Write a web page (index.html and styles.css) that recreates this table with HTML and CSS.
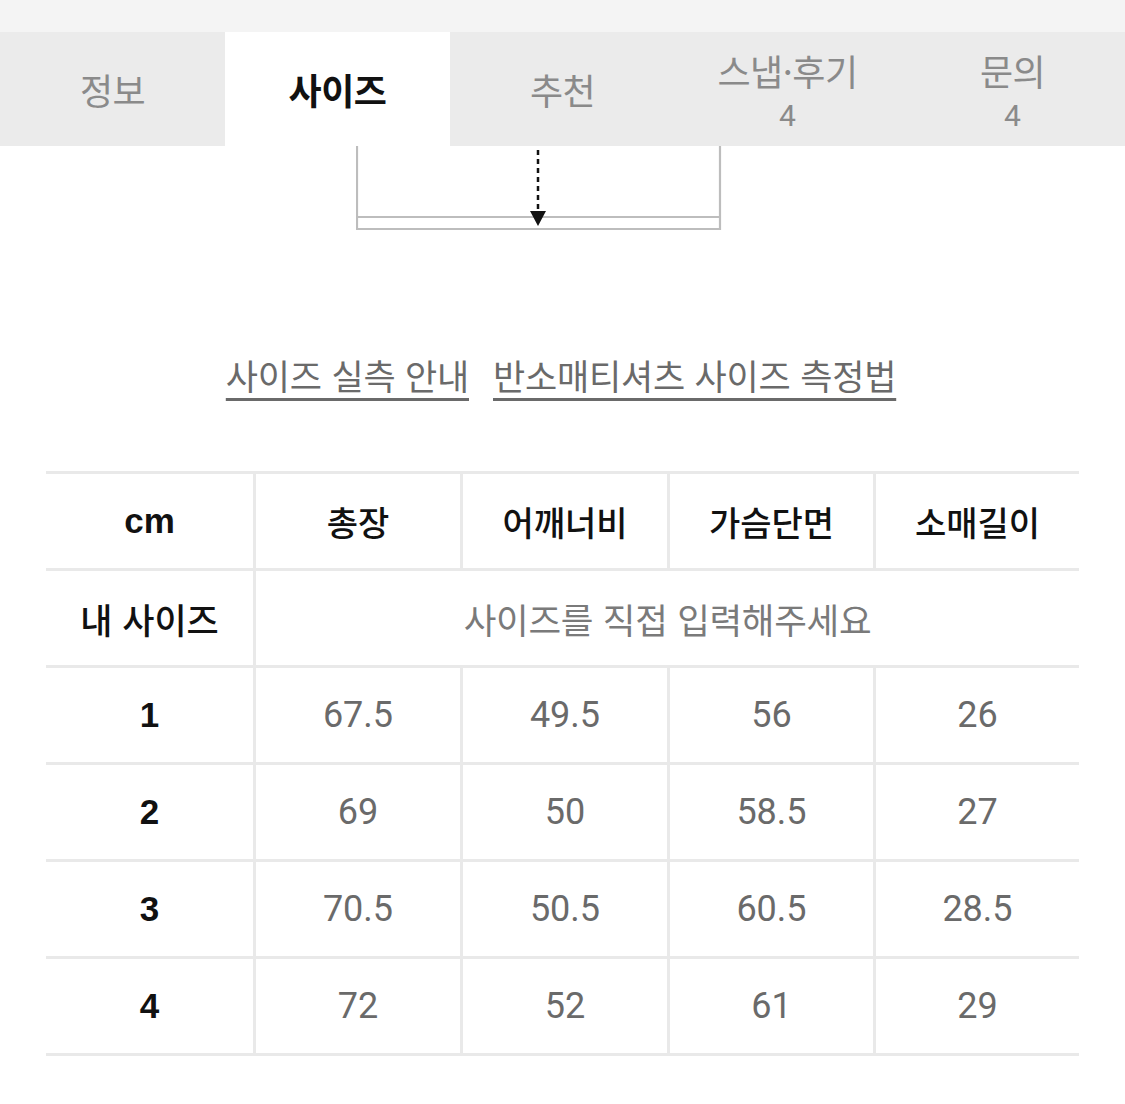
FILE: index.html
```html
<!DOCTYPE html>
<html lang="ko">
<head>
<meta charset="utf-8">
<link rel="stylesheet" href="styles.css">
</head>
<body>
<div class="topstrip"></div>
<nav class="tabs">
  <div class="tab"><span class="tab-label">정보</span></div>
  <div class="tab active"><span class="tab-label">사이즈</span></div>
  <div class="tab"><span class="tab-label">추천</span></div>
  <div class="tab two"><span class="tab-label">스냅·후기</span><span class="tab-count">4</span></div>
  <div class="tab two"><span class="tab-label">문의</span><span class="tab-count">4</span></div>
</nav>
<div class="diagram">
  <svg width="366" height="86" viewBox="0 0 366 86">
    <path d="M1 0 V83 H364 V0" fill="none" stroke="#bdbdbd" stroke-width="2.2"/>
    <path d="M1 71 H364" fill="none" stroke="#bdbdbd" stroke-width="2.2"/>
    <path d="M182 4 V66" fill="none" stroke="#111" stroke-width="2.5" stroke-dasharray="5 4"/>
    <path d="M174 65 L190 65 L182 80 Z" fill="#111"/>
  </svg>
</div>
<div class="links">
  <a class="link">사이즈 실측 안내</a>
  <a class="link">반소매티셔츠 사이즈 측정법</a>
</div>
<div class="size-table">
  <div class="cell head first">cm</div>
  <div class="cell head">총장</div>
  <div class="cell head">어깨너비</div>
  <div class="cell head">가슴단면</div>
  <div class="cell head">소매길이</div>

  <div class="cell mine first">내 사이즈</div>
  <div class="cell placeholder span4">사이즈를 직접 입력해주세요</div>

  <div class="cell num first">1</div>
  <div class="cell val">67.5</div>
  <div class="cell val">49.5</div>
  <div class="cell val">56</div>
  <div class="cell val">26</div>

  <div class="cell num first">2</div>
  <div class="cell val">69</div>
  <div class="cell val">50</div>
  <div class="cell val">58.5</div>
  <div class="cell val">27</div>

  <div class="cell num first">3</div>
  <div class="cell val">70.5</div>
  <div class="cell val">50.5</div>
  <div class="cell val">60.5</div>
  <div class="cell val">28.5</div>

  <div class="cell num first">4</div>
  <div class="cell val">72</div>
  <div class="cell val">52</div>
  <div class="cell val">61</div>
  <div class="cell val">29</div>
</div>
</body>
</html>
```
FILE: styles.css
```css
html, body {
  margin: 0;
  padding: 0;
  background: #ffffff;
}
body {
  width: 1125px;
  height: 1104px;
  overflow: hidden;
  font-family: "Noto Sans CJK KR", "Noto Sans", sans-serif;
  color: #111;
}
.topstrip {
  height: 32px;
  background: #f4f4f4;
}
.tabs {
  display: grid;
  grid-template-columns: repeat(5, 225px);
  height: 114px;
  background: #ebebeb;
}
.tab {
  display: flex;
  flex-direction: column;
  align-items: center;
  justify-content: center;
  color: #8a8a8a;
}
.tab-label {
  font-size: 36px;
  line-height: 40px;
  letter-spacing: -0.5px;
}
.tab.active {
  background: #ffffff;
  color: #111;
}
.tab.active .tab-label {
  font-weight: 700;
  font-size: 36px;
}
.tab.two .tab-label {
  line-height: 40px;
  margin-top: 8px;
}
.tab-count {
  font-family: Roboto, "Noto Sans", sans-serif;
  font-size: 30px;
  line-height: 40px;
  margin-top: 6px;
}
.diagram {
  height: 86px;
  padding-left: 356px;
}
.diagram svg {
  display: block;
}
.links {
  display: flex;
  justify-content: center;
  gap: 24px;
  margin-top: 113px;
  padding-right: 3px;
  height: 60px;
}
.link {
  font-size: 35px;
  line-height: 60px;
  color: #6a6a6a;
  text-decoration: underline;
  text-decoration-thickness: 3px;
  text-underline-offset: 8px;
  letter-spacing: -0.2px;
}
.size-table {
  margin-top: 66px;
  margin-left: 46px;
  width: 1033px;
  display: grid;
  grid-template-columns: 207px 207px 207px 206px 206px;
  border-top: 3px solid #e9e9e9;
}
.cell {
  height: 94px;
  border-bottom: 3px solid #e9e9e9;
  border-left: 3px solid #e9e9e9;
  display: flex;
  align-items: center;
  justify-content: center;
  font-size: 34px;
}
.cell.first {
  border-left: none;
}
.span4 {
  grid-column: span 4;
}
.head {
  font-weight: 500;
  color: #111;
}
.head.first {
  font-family: "Liberation Sans", Arial, sans-serif;
  font-weight: 700;
  font-size: 35px;
}
.mine {
  font-weight: 500;
  font-size: 35px;
}
.placeholder {
  color: #7a7a7a;
  font-size: 35.5px;
  letter-spacing: -0.3px;
}
.num {
  font-family: "Liberation Sans", Arial, sans-serif;
  font-weight: 700;
  font-size: 35px;
  color: #111;
}
.val {
  font-family: Roboto, "Noto Sans", sans-serif;
  font-size: 36px;
  color: #6a6a6a;
}
```
